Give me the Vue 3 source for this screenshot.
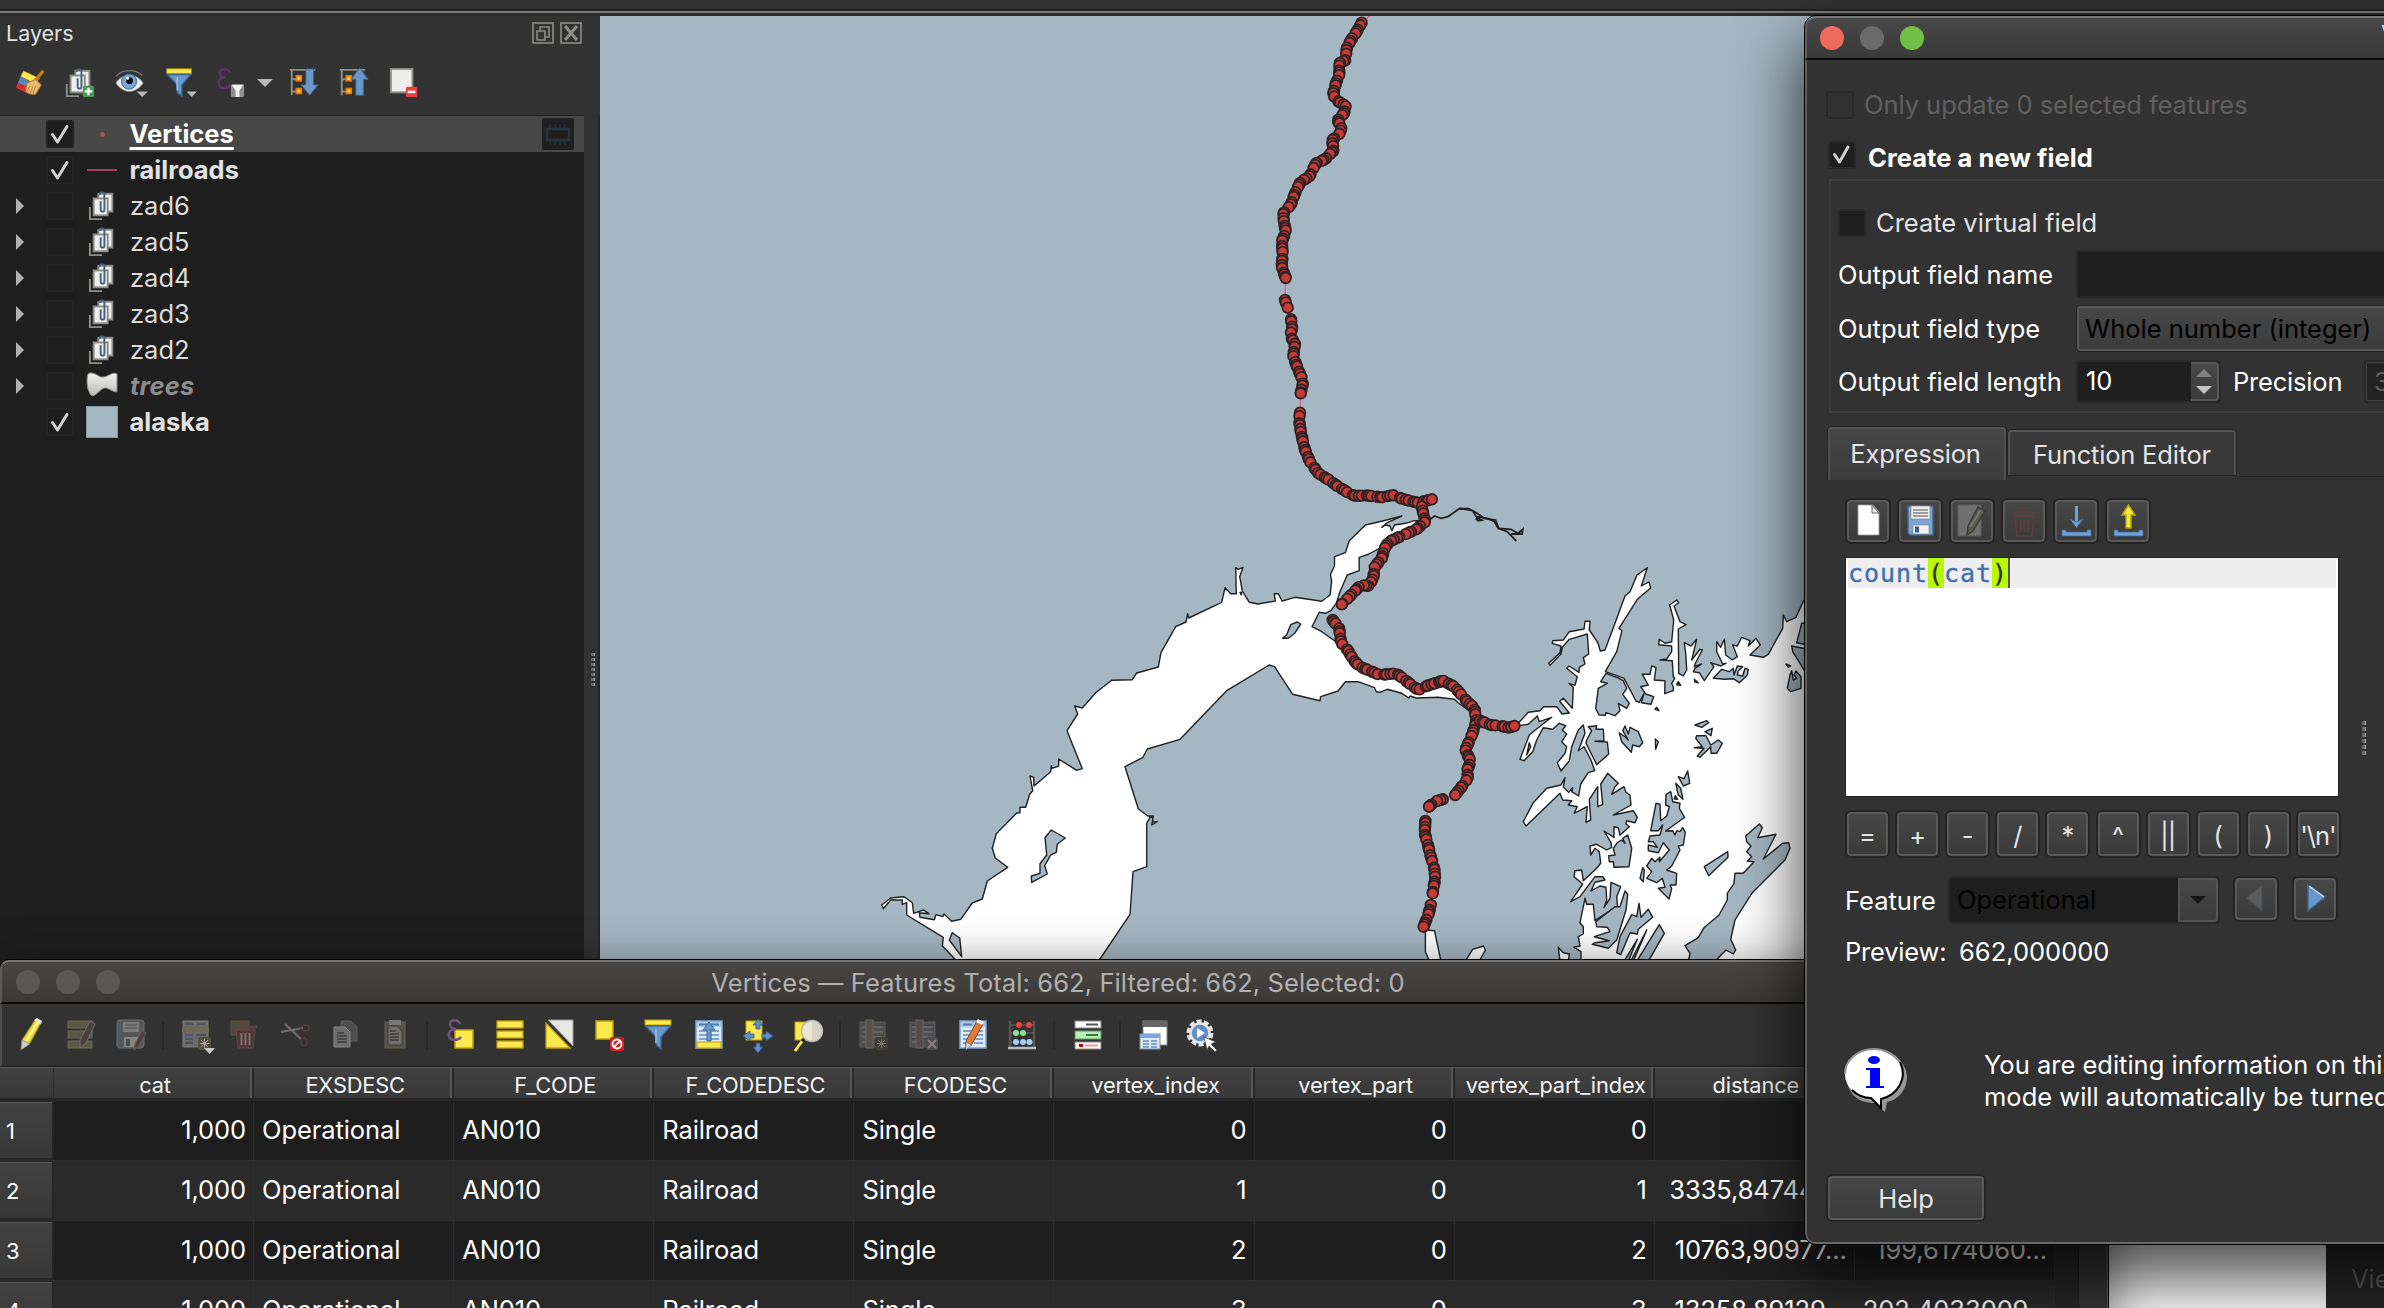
<script setup>
/* ---------- icon artwork, 32x32 grid ---------- */
const copies = `<path d="M2 18v13h13" fill="none" stroke="#8b8f87" stroke-width="2"/>
  <rect x="11" y="4" width="15" height="19" fill="#eeeeec" stroke="#888a85" stroke-width="2"/>
  <rect x="6" y="9" width="15" height="18" fill="#eeeeec" stroke="#888a85" stroke-width="2"/>
  <path d="M17.500 22V5a2.500 2.500 0 0 0-5 0M13.500 12v9a2 2 0 0 0 4 0" fill="none" stroke="#41607f" stroke-width="2"/>`
const funnel = `<rect x="2" y="2" width="26" height="5" fill="#fce94f" stroke="#c4a000" stroke-width="1"/>
  <path d="M2.500 8h25L18 19v12l-5-4v-8z" fill="#6a97cb" stroke="#3c6794" stroke-width="1.500"/>
  <path d="M13 11v14" stroke="#9fc0e4" stroke-width="1.500"/>`
const treeBranch = `<path d="M1 3h27M3 3v27M3 13h6M3 26h6" fill="none" stroke="#8b8f87" stroke-width="2"/>
  <rect x="7" y="8.500" width="7" height="7" fill="#f57900"/><rect x="9" y="10.500" width="3" height="3" fill="#fce94f"/>
  <rect x="7" y="22" width="7" height="7" fill="#f57900"/><rect x="9" y="24" width="3" height="3" fill="#fce94f"/>`
const sheet = `<rect x="3" y="3" width="26" height="27" fill="#dfe9f5" stroke="#7da3d0" stroke-width="1.500"/>
  <rect x="4" y="4" width="24" height="5" fill="#a9c8ec"/><path d="M6 6.500h9M18 6.500h8" stroke="#4f7cb3" stroke-width="2"/>
  <path d="M6 13h8M17 13h9M6 17h8M17 17h9M6 21h8M17 21h9M6 25h8M17 25h9" stroke="#5f8fc9" stroke-width="1.500"/>`

const icons = {
  brush: `<path d="M9 4l17 8-4 6-16-8z" fill="#fce94f" stroke="#8a7a1a" stroke-width=".6"/><path d="M6 10l15 8-4 5-14-6z" fill="#5b86b8"/>
    <path d="M3 17l14 6-2 6L1 22z" fill="#e32b25"/><path d="M13 17l9-4 6 6-6 10c-4 1-8-1-11-3z" fill="#e9b96e" stroke="#a8762c"/>
    <path d="M16 20l-3 6M19 21l-3 7M22 20l-3 9" stroke="#a8762c" stroke-width=".8"/><path d="M22 14l8-10" stroke="#c17d11" stroke-width="3.500"/>`,
  addGroup: copies + `<rect x="19" y="20" width="12" height="12" rx="2" fill="#4d9a52"/><path d="M25 22v8M21 26h8" stroke="#fff" stroke-width="2.400"/>`,
  group: copies,
  eye: `<path d="M1 17C7 7 22 5 30 17c-8 12-21 12-29 0z" fill="#eee" stroke="#8a8a86" stroke-width="1"/>
    <circle cx="15" cy="15.500" r="8" fill="#7ba5d6" stroke="#3c6794"/><circle cx="15.500" cy="14.500" r="3.600" fill="#0a0a0a"/>
    <circle cx="13.500" cy="12" r="1.600" fill="#fff"/><path d="M1 10C8 2 22 2 29 9" fill="none" stroke="#77777a" stroke-width="1.400"/>
    <path d="M23 26h12l-6 6z" fill="#b8b8b8"/>`,
  filterMenu: funnel + `<path d="M23 26h11l-5.500 6z" fill="#b8b8b8"/>`,
  filter: funnel,
  epsilon: `<path d="M16 6C14 1 6 1 5 6c0 4 3 5 6 5-5 0-8 3-7 7 1 5 9 6 13 1" fill="none" stroke="#5c3566" stroke-width="2.600"/>
    <rect x="17" y="18" width="14" height="14" rx="2" fill="#8f8f8d"/><path d="M18 19h12l-4 6v7h-4v-7z" fill="#f4f4f4"/>`,
  expand: treeBranch + `<path d="M18 2h8v17h5l-9 11-9-11h5z" fill="#6a97cb" stroke="#3c6794"/>`,
  collapse: treeBranch + `<path d="M18 30h8V13h5L22 1l-9 12h5z" fill="#6a97cb" stroke="#3c6794"/>`,
  remove: `<rect x="2" y="2" width="23" height="25" fill="#eeeeec" stroke="#888a85" stroke-width="2"/>
    <rect x="18" y="21" width="12" height="11" rx="2" fill="#ef4040"/><path d="M20 26.500h8" stroke="#fff" stroke-width="2.600"/>`,
  trees: `<defs><linearGradient id="tg" x2="0" y2="1"><stop stop-color="#f2f2f0"/><stop offset="1" stop-color="#b9b9b6"/></linearGradient></defs>
    <path d="M2 4c2-2 6-1 9 1s6 3 10 1c4-2 7-4 10-2v18c-4 0-7-3-11-4-5-1-8 7-14 8C1 22 0 10 2 4z" fill="url(#tg)" stroke="#888a85"/>`,
  chip: `<rect x="0" y="0" width="32" height="32" rx="2" fill="#1f1f1f"/><rect x="5" y="11" width="22" height="11" fill="none" stroke="#28333f" stroke-width="2.500"/>
    <path d="M8 6v4M13 6v4M18 6v4M23 6v4M8 23v4M13 23v4M18 23v4M23 23v4" stroke="#28333f" stroke-width="1.500"/>`,
  float: `<rect x="2" y="2" width="20" height="20" fill="none" stroke="#8e8c88" stroke-width="1.600"/><path d="M9 9V6h9v10h-4M6 10h8v9H6z" fill="none" stroke="#8e8c88" stroke-width="1.600"/>`,
  close: `<rect x="2" y="2" width="20" height="20" fill="none" stroke="#8e8c88" stroke-width="1.600"/><path d="M6 5l12 14M18 5L6 19" stroke="#8e8c88" stroke-width="3"/>`,
  /* attribute table toolbar */
  pencil: `<path d="M7 22L20 2l6 3-11 20-9 6z" fill="#edd93c" stroke="#96861d"/><path d="M11 23L23 4" stroke="#fff7a0" stroke-width="2"/><path d="M7 22l8 4-9 6z" fill="#ccc" stroke="#777" stroke-width=".6"/><path d="M19 2l7 4 1-3-5-3z" fill="#eee"/>`,
  multiEdit: `<g fill="#5b5741" stroke="#6d6a58"><rect x="3" y="3" width="24" height="7"/><rect x="3" y="13" width="24" height="7"/><rect x="3" y="23" width="24" height="7"/></g>
    <path d="M15 22L25 3l5 3-9 19-6 5z" fill="#4a3f3d" stroke="#75706e"/>`,
  saveEdit: `<rect x="2" y="2" width="27" height="28" rx="3" fill="#55585a" stroke="#6b6e70"/><rect x="8" y="4" width="16" height="10" fill="#7a7a7a"/><path d="M10 7h12M10 10h12" stroke="#505050"/>
    <rect x="9" y="19" width="14" height="10" fill="#858585"/><rect x="11" y="21" width="4" height="7" fill="#4a4a4a"/><path d="M20 26l7-13 4 2-7 13-5 4z" fill="#4f3d3a" stroke="#6a5a57"/>`,
  addFeature: `<rect x="3" y="3" width="25" height="26" fill="#6a6a6a" stroke="#7a7a7a"/><path d="M5 6h9M17 6h9M5 17h8M16 17h10M5 21h8M5 25h8" stroke="#4a5560" stroke-width="1.800"/><rect x="2" y="10" width="27" height="4" fill="#6e6a52"/>
    <rect x="18" y="19" width="13" height="13" rx="2" fill="#54503f"/><path d="M24.500 21v9M20 25.500h9M21 22l7 7M28 22l-7 7" stroke="#a3a3a0"/><path d="M24 30h11l-5.500 6z" fill="#c8c8c8"/>`,
  trash: `<rect x="2" y="3" width="18" height="14" fill="#4e4b3b" stroke="#5c5947"/><path d="M7 12h19l-2 18H9z" fill="#4c3636" stroke="#664848"/><path d="M5 9h23M12 5h9" stroke="#5c4242" stroke-width="3"/><path d="M12.500 15v12M16.500 15v12M20.500 15v12" stroke="#8a7272" stroke-width="1.800"/>`,
  cut: `<path d="M2 14l22-4M6 6l16 15" fill="none" stroke="#6e6e6e" stroke-width="2.200"/><ellipse cx="26" cy="10" rx="4" ry="3" fill="none" stroke="#573d3d" stroke-width="1.600"/><ellipse cx="25" cy="24" rx="3" ry="4" fill="none" stroke="#573d3d" stroke-width="1.600"/>`,
  copy: `<path d="M12 3h10l6 6v14H12z" fill="#4d4d4d" stroke="#5e5e5e"/><path d="M5 9h11l5 5v15H5z" fill="#6e6e6e" stroke="#858585"/><path d="M8 15h7M8 18h10M8 21h10M8 24h10" stroke="#3e3e3e" stroke-width="1.400"/>`,
  paste: `<rect x="6" y="4" width="20" height="26" fill="#555349" stroke="#625f54"/><rect x="10" y="2" width="12" height="5" fill="#777"/><path d="M9 8h9l5 5v14H9z" fill="#6e6e6e" stroke="#3c3c3c"/><path d="M11 13h6M11 16h9M11 19h9M11 22h9" stroke="#3e3e3e" stroke-width="1.400"/>`,
  selExpr: `<rect x="11" y="12" width="18" height="18" fill="#fce94f" stroke="#c4a000" stroke-width="1.500"/><path d="M16 6C14 1 6 1 6 6c0 4 3 5 6 5-5 0-8 3-7 7 1 5 9 5 12 1" fill="none" stroke="#75507b" stroke-width="2.400"/>`,
  selAll: `<g fill="#fce94f" stroke="#c4a000" stroke-width="1.300"><rect x="3" y="3" width="26" height="7"/><rect x="3" y="13" width="26" height="7"/><rect x="3" y="23" width="26" height="7"/></g>`,
  invert: `<path d="M5 2h25v26z" fill="#e8e8e6" stroke="#9a9a98"/><path d="M3 5v25h24z" fill="#fce94f" stroke="#c4a000" stroke-width="1.300"/>`,
  deselect: `<rect x="3" y="3" width="17" height="18" fill="#fce94f" stroke="#c4a000" stroke-width="1.500"/><rect x="17" y="19" width="14" height="14" rx="2" fill="#d32020"/><circle cx="24" cy="26" r="4.500" fill="none" stroke="#fff" stroke-width="1.800"/><path d="M21 29l6-6" stroke="#fff" stroke-width="1.800"/>`,
  moveTop: sheet + `<rect x="4" y="24" width="24" height="6" fill="#fce94f" stroke="#c4a000"/><path d="M14 23V12h-4l6-8 6 8h-4v11z" fill="#6a97cb" stroke="#3c6794"/>`,
  pan: `<rect x="4" y="3" width="16" height="19" fill="#fce94f" stroke="#c4a000"/><g fill="#5f8fc9" stroke="#2f5580" stroke-width=".8"><path d="M16 1l5 6h-3v4h-4V7h-3zM16 35l5-6h-3v-4h-4v4h-3zM1 18l7-5v3h4v4H8v3zM31 18l-7-5v3h-4v4h4v3z"/></g>`,
  zoomSel: `<rect x="3" y="4" width="14" height="18" fill="#fce94f" stroke="#c4a000"/><path d="M3 33l10-14" stroke="#fce94f" stroke-width="3"/><circle cx="20" cy="13" r="10.500" fill="#e9e7d4" stroke="#b9b8ad" stroke-width="1.500"/><path d="M20 3a10 10 0 0 1 0 20z" fill="#d6d4c3"/><circle cx="11" cy="22" r="1.800" fill="#111"/>`,
  newField: `<rect x="3" y="4" width="25" height="25" fill="#4b4e50" stroke="#5d5d5d"/><path d="M16 9h10M16 14h10M16 19h10M5 9h4M5 14h4M5 19h4M5 24h4" stroke="#6c6c6c" stroke-width="1.600"/><rect x="9" y="2" width="7" height="28" fill="#54514a" stroke="#6a675f"/><rect x="18" y="19" width="13" height="13" rx="2" fill="#403e35"/><path d="M24.500 21v9M20 25.500h9M21 22l7 7M28 22l-7 7" stroke="#77756a"/>`,
  delField: `<rect x="3" y="4" width="25" height="25" fill="#4b4e50" stroke="#5d5d5d"/><path d="M16 9h10M16 14h10M16 19h10M5 9h4M5 14h4M5 19h4M5 24h4" stroke="#6c6c6c" stroke-width="1.600"/><rect x="9" y="2" width="7" height="28" fill="#544c4c" stroke="#6a6060"/><rect x="19" y="19" width="12" height="13" rx="2" fill="#514b4b"/><path d="M21 22l8 8M29 22l-8 8" stroke="#8a8484" stroke-width="2"/>`,
  organize: sheet + `<path d="M9 23L20 3l6 3-11 20-6 6z" fill="#e07b39" stroke="#8f4513"/><path d="M9 24l6 3-6 5z" fill="#ddd" stroke="#555" stroke-width=".6"/><path d="M19 4l6 3 2-3-6-3z" fill="#eee"/>`,
  abacus: `<path d="M4 3v27M28 3v27" stroke="#555" stroke-width="2.500"/><path d="M4 7h24M4 15h24M4 24h24" stroke="#666"/><path d="M2 30h28" stroke="#bbb" stroke-width="2.500"/>
    <g fill="#ef4040"><circle cx="13" cy="7" r="3"/><circle cx="23" cy="7" r="3"/></g><g fill="#8ae28a"><circle cx="10" cy="15" r="3"/><circle cx="17" cy="15" r="3"/></g><g fill="#a4cdf5"><circle cx="10" cy="24" r="3"/><circle cx="17" cy="24" r="3"/><circle cx="23.500" cy="24" r="3"/></g>`,
  conditional: `<rect x="3" y="3" width="26" height="7" fill="#fff" stroke="#888"/><path d="M14 6.500h12" stroke="#555" stroke-width="2"/><rect x="3" y="13" width="26" height="8" fill="#b3f0b3" stroke="#5b9a5b"/><path d="M14 17h12" stroke="#4a704a" stroke-width="2"/><rect x="3" y="24" width="26" height="7" fill="#fff" stroke="#888"/><rect x="7" y="26" width="4" height="3" fill="#c00"/><path d="M13 27.500h13" stroke="#ef9a9a" stroke-width="2"/>`,
  dock: `<rect x="6" y="3" width="24" height="24" fill="#fff" stroke="#888"/><rect x="6" y="3" width="24" height="6" fill="#666"/><rect x="3" y="16" width="20" height="15" fill="#dfe9f5" stroke="#888"/><rect x="3" y="16" width="20" height="4" fill="#7da7d9"/><path d="M6 23h6M14 23h6M6 26h6M14 26h6M6 29h6M14 29h6" stroke="#5f8fc9" stroke-width="1.400"/>`,
  actions: `<circle cx="14" cy="15" r="11.500" fill="none" stroke="#e4e4e2" stroke-width="4" stroke-dasharray="5 2.200"/><circle cx="14" cy="15" r="9.500" fill="#5f8fc9" stroke="#e4e4e2" stroke-width="2.500"/><path d="M11 10l8 5-8 5z" fill="#fff"/><path d="M18 19l12 5-5 2 6 6-2 2-6-6-2 4z" fill="#fff" stroke="#444" stroke-width=".8"/>`,
  /* expression toolbar */
  file: `<path d="M6 1h15l6 7v23H6z" fill="#fff" stroke="#999" stroke-width=".8"/><path d="M20 1v8h7z" fill="#eee" stroke="#666"/>`,
  floppy: `<path d="M4 2h25v29H6l-2-2z" fill="#7ba5d6" stroke="#3c6794" stroke-width="1.400"/><rect x="7" y="2" width="19" height="13" fill="#eee" stroke="#888" stroke-width=".7"/><path d="M9 6h15M9 9h15M9 12h15" stroke="#888" stroke-width="1.300"/><rect x="9" y="21" width="16" height="9" fill="#f2f2f2" stroke="#888" stroke-width=".7"/><rect x="11" y="22.500" width="4" height="6" fill="#33608f"/>`,
  editExpr: `<path d="M2 1h23v31H2z" fill="#707070" stroke="#5c5c5c"/><path d="M12 22L22 3l7 4-12 20-6 4z" fill="#5a5b52" stroke="#3d3d38" stroke-width="1.500"/><path d="M14 23L25 6" stroke="#7c7d72" stroke-width="1.500"/>`,
  bin: `<path d="M7 12h19l-2 20H9z" fill="none" stroke="#573f3f" stroke-width="2"/><path d="M5 8h23M12 4h9" stroke="#573f3f" stroke-width="2.500"/><path d="M13 15v13M16.500 15v13M20 15v13" stroke="#573f3f" stroke-width="2"/>`,
  importIco: `<path d="M2 26v6h29v-6h-4v2H6v-2z" fill="#6fa0d8" stroke="#3c6794" stroke-width=".8"/><path d="M16.500 2v17" stroke="#6fa0d8" stroke-width="3"/><path d="M10 15l6.500 9 6.500-9-6.500 3z" fill="#6fa0d8" stroke="#3c6794" stroke-width=".8"/>`,
  exportIco: `<path d="M2 26v6h29v-6h-4v2H6v-2z" fill="#6fa0d8" stroke="#3c6794" stroke-width=".8"/><path d="M14 24V11h-4l6.500-10 6.500 10h-4v13z" fill="#f3e63c" stroke="#b3a800" stroke-width="1.400"/>`,
  prev: `<path d="M22 2v26L6 15z" fill="#5a5d60" stroke="#4a4a4a" stroke-width="1.200"/>`,
  next: `<path d="M9 2v26l17-14z" fill="#6a97cb" stroke="#3c6794" stroke-width="1.500"/><path d="M10 3l15 11" stroke="#cfe0f3" stroke-width="1.500"/>`
}

const layerTools = ['brush', 'addGroup', 'eye', 'filterMenu', 'epsilon', 'expand', 'collapse', 'remove']
const layers = [
  { name: 'Vertices', on: 1, sym: 'point', bold: 1, sel: 1 },
  { name: 'railroads', on: 1, sym: 'line', bold: 1 },
  { name: 'zad6', sym: 'group', exp: 1 }, { name: 'zad5', sym: 'group', exp: 1 }, { name: 'zad4', sym: 'group', exp: 1 },
  { name: 'zad3', sym: 'group', exp: 1 }, { name: 'zad2', sym: 'group', exp: 1 },
  { name: 'trees', sym: 'trees', exp: 1, dim: 1 },
  { name: 'alaska', on: 1, sym: 'fill', bold: 1 }
]
const tableGroups = [
  ['pencil', 'multiEdit', 'saveEdit'],
  ['addFeature', 'trash', 'cut', 'copy', 'paste'],
  ['selExpr', 'selAll', 'invert', 'deselect', 'filter', 'moveTop', 'pan', 'zoomSel'],
  ['newField', 'delField', 'organize', 'abacus'],
  ['conditional'],
  ['dock', 'actions']
]
const columns = ['cat', 'EXSDESC', 'F_CODE', 'F_CODEDESC', 'FCODESC', 'vertex_index', 'vertex_part', 'vertex_part_index', 'distance', 'angle']
const textCols = [1, 2, 3, 4]
const rows = [
  ['1,000', 'Operational', 'AN010', 'Railroad', 'Single', '0', '0', '0', '', ''],
  ['1,000', 'Operational', 'AN010', 'Railroad', 'Single', '1', '0', '1', '3335,847441...', ''],
  ['1,000', 'Operational', 'AN010', 'Railroad', 'Single', '2', '0', '2', '10763,90977...', '199,6174060...'],
  ['1,000', 'Operational', 'AN010', 'Railroad', 'Single', '3', '0', '3', '13258,89129...', '202,4033009...']
]
const exprTools = ['file', 'floppy', 'editExpr', 'bin', 'importIco', 'exportIco']
const operators = ['=', '+', '-', '/', '*', '^', '||', '(', ')', "'\\n'"]

/* ---------- map geometry ---------- */
// each sheet was digitised in its own grid: origin and units per pixel
const sheets = {
  A: [840, 460, 3, 3],
  B: [1240, 460, 2.751, 3],
  C: [1500, 560, 3, 3],
  E: [1180, 0, 3, 3]
}
const pts = (s, str) => {
  const [ox, oy, sx, sy] = sheets[s]
  return str.trim().split(/\s+/).map(p => {
    const [x, y] = p.split(',').map(Number)
    return [+(ox + x / sx).toFixed(1), +(oy + y / sy).toFixed(1)]
  })
}
const join = (...parts) => parts.flat().map(p => p.join(',')).join(' ')

const inlet = join(
  pts('A', '347,1500 307,1457 310,1432 200,1365 200,1328 187,1333 187,1320 152,1320 130,1346 125,1335 152,1314 192,1310 217,1328 221,1360 250,1350 267,1361 238,1358 240,1372 283,1379 288,1364 308,1370 312,1362 335,1384 362,1378 397,1329 427,1317 442,1263 503,1222 466,1194 457,1165 469,1121 530,1059 540,1058 540,1042 557,1042 569,1003 578,992 570,948 581,952 582,978 632,935 634,917 636,925 656,918 656,897 710,931 727,926 681,812 713,762 704,738 727,744 767,698 815,661 877,659 890,639 955,621 963,578 1007,500 1038,486 1043,461 1046,474 1145,427 1155,383 1172,401 1189,401 1187,323 1195,328 1209,322 1199,350 1207,393 1228,427 1254,432 1306,423 1303,401 1315,401 1326,423 1365,412 1445,424'),
  pts('B', '248,405 252,365 249,343 260,318 260,290 290,278 300,243 345,195 395,182 445,168 405,188 390,202 400,195 412,198 418,212 425,195 455,190 480,182 500,182 480,205 440,225 410,245 395,258 355,282 328,292 328,332 295,345 275,395 265,430 250,452 235,460 218,457 198,500 225,515 260,542 300,580 315,610 385,645 430,650 490,690 520,692 558,680 590,690 620,730 640,760 600,728 590,718 545,712 485,714 468,708 465,714 445,700 405,688 385,697 375,695 370,683 325,665 290,665 270,693 222,710 220,722 145,703 95,620 80,615 0,668'),
  pts('A', '1160,692 1020,838 922,867 909,892 855,920 895,1046 923,1068 940,1068 935,1095 952,1085 938,1086 938,1072 930,1072 920,1090 920,1220 879,1235 870,1363 778,1500')
)
const sound = join(pts('C', `55,490 85,457 120,452 131,440 170,440 186,462 208,459 179,424 190,415 217,445 220,382 207,370 225,376 232,350 200,325 207,318 237,337
  238,322 255,312 250,293 266,282 262,222 208,238 187,262 183,282 150,316 146,310 180,278 183,258 157,250 158,242 190,240 208,215 252,207 255,184 270,184 268,210
  293,247 301,273 315,270 345,190 375,108 390,95 411,45 442,23 424,78 447,66 452,84 412,118 357,205 366,212 350,275 316,335 348,346 372,355 408,423
  418,427 431,402 424,428 453,433 461,410 437,402 422,380 445,375 427,343 450,343 455,318 468,322 463,360 495,362 494,401 520,392 520,382 515,370 524,355 520,350 517,302 480,300
  500,297 515,275 515,258 476,254 478,238 495,250 515,245 521,180 509,135 530,120 536,128 522,138 540,185 558,194 535,207 536,340 550,348 560,330 557,280 553,248 573,258 590,238
  575,300 600,268 607,270 585,312 583,320 605,312 585,325 580,335 598,338 613,362 642,320 632,308 662,318 678,310 668,312 650,275 650,245 662,262 673,238 677,285 697,300 712,290 698,255 712,258
  725,232 750,242 745,258 768,235 781,255 750,285 790,292 805,283 848,205 850,165 860,185 888,172 912,120 2600,120 2600,2400 243,2400
  243,1175 222,1162 240,1158 235,1130 250,1122 250,1100 240,1088 255,1015 260,1033 280,1033 285,1082 345,1042 355,1065 350,1010 362,980 333,967 330,1015 312,1043 320,1020 318,982 300,978 273,993
  285,967 315,960 308,950 285,950 240,1010 212,1025 248,972 222,950 225,932 245,930 250,962 290,925 302,910 298,875 285,865 272,885 270,858 290,853 320,870 335,862 333,848 312,813 342,832 342,800 355,803 360,825 388,800
  378,792 380,782 405,788 412,772 400,752 340,765 393,735 390,705 378,697 372,680 335,703 345,680 355,670 323,640 302,672 308,733 293,740 293,680 268,718 272,780 258,787 262,740
  222,760 232,740 205,735 215,722 188,720 180,700 78,798 70,785 100,728 140,685 183,675 195,653 190,682 206,697 218,683 215,695 236,708 242,672 265,638 284,632 273,600 252,560 235,572 255,520
  250,495 235,510 215,560 208,602 183,633 172,608 195,580 200,560 185,545 200,522 187,510 197,497 178,490 158,508 130,503 110,540 98,575 72,602 60,598 88,525 103,512 155,472 118,485 112,468 85,493 55,497`))

const islands = [
  ['A', '1352,494 1372,486 1382,492 1364,520 1345,535 1328,535 1340,524'],
  ['A', '634,1110 676,1134 652,1153 649,1177 632,1185 614,1217 622,1242 575,1267 574,1248 600,1240 600,1211 620,1185 615,1133'],
  ['A', '337,1418 359,1434 365,1490 328,1440'],
  ['A', '1200,397 1205,398 1204,405'],
  ['C', '318,340 350,352 370,362 380,385 368,403 388,430 380,445 355,430 360,452 345,467 318,458 316,466 297,465 287,445 295,385 322,370 302,365'],
  ['C', '265,500 290,497 288,508 310,508 312,542 285,544 322,546 326,582 290,614 258,550 260,540 275,512'],
  ['C', '375,498 385,522 390,502 415,515 428,548 418,560 398,555 394,577 365,545 358,518 375,530 385,540 368,512'],
  ['C', '466,537 475,545 467,568'], ['C', '80,585 88,548 92,560'],
  ['C', '585,495 620,482 626,488 605,502'], ['C', '615,515 637,505 633,527'],
  ['C', '590,527 618,527 632,555 655,540 667,550 650,580 633,580 632,560 600,592 592,588 612,565 583,563 607,560 587,535'],
  ['C', '640,355 665,328 688,335 700,325 702,345 712,318 728,320 715,332 712,345 728,348 735,325 745,328 742,345 718,368 700,356 675,358'],
  ['C', '470,442 477,452 465,448'], ['C', '535,365 542,376 530,374'], ['C', '583,358 595,368 585,366'], ['C', '858,312 872,318 865,322'],
  ['C', '870,345 875,332 880,360 890,355 882,345 888,333 903,350 903,385 872,395 862,385'],
  ['C', '905,190 925,190 925,255 890,248'], ['C', '875,258 925,268 925,350 900,310 878,275'],
  ['C', '563,633 569,670 550,678 535,650 552,656'], ['C', '527,670 542,685 549,718 535,705'], ['C', '526,707 533,718 523,717'],
  ['C', '468,730 480,733 482,782 500,768 508,740 497,735 498,703 512,695 518,725 540,730 538,745 554,772 497,813 518,812 525,825 530,812 540,815 548,803 556,817 550,855 535,858 540,870 515,918 500,930 530,940 528,975 510,975 515,985 507,1017 475,985 495,982 487,955 470,968 440,955 455,935 440,918 455,895 465,905 480,892 478,905 508,870 490,848 475,878 445,872 445,855 472,862 460,845 445,845 450,828 480,825 488,795 475,812 452,812'],
  ['C', '428,923 433,930 430,965 420,955'],
  ['C', '383,825 395,865 387,920 342,922 340,905 328,905 326,887 345,885 340,865 352,848 365,840 375,850 368,835'],
  ['C', '613,920 683,875 684,892 626,947'],
  ['C', '645,1204 678,1170 700,1182 707,1170 692,1138 705,1080 757,998 855,900 870,865 866,848 848,850 790,897 828,823 773,833 787,803 778,792 737,828 740,845 753,858 740,875 755,890 742,903 762,905 730,940 705,940 702,970 682,1000 682,1020 657,1065 612,1103 595,1133 555,1157 570,1180 565,1204'],
  ['C', '375,993 383,1003 378,1050 350,1140 325,1165 277,1153 285,1148 328,1142 283,1130 330,1115 322,1102 290,1100 287,1085 345,1040 360,1040'],
  ['C', '417,1030 423,1072 445,1048 458,1072 415,1108 412,1122 390,1118 362,1184 350,1178 360,1130 395,1064 410,1070'],
  ['C', '478,1094 493,1120 445,1204 410,1204'], ['C', '412,1138 385,1204 372,1204'], ['C', '440,1110 400,1204 392,1204']
].map(([s, p]) => join(pts(s, p)))
const lagoons = [
  ['B', '510,1410 535,1412 552,1500 520,1500 510,1475'],
  ['B', '622,1500 640,1468 670,1458 675,1470 660,1500'],
  ['C', '175,1162 190,1178 208,1182 205,1204 180,1204']
].map(([s, p]) => join(pts(s, p)))
const rivers = [
  join(pts('B', '515,185 535,168 553,175 572,170 605,145 640,152 650,170 680,175 700,185 710,205 735,215 760,243')),
  join(pts('B', '605,147 628,145 650,158 672,175 703,180 712,205 745,208 765,220 778,208 776,222 745,222')),
  join(pts('B', '650,172 665,180 655,182 648,175'))
]

const tracks = [
  pts('E', '545,68 530,95 512,122 500,145 497,180 478,190 478,225 468,250 460,280 465,298 497,318 492,340 472,362 485,380 480,400 455,422 462,450 435,478 408,490 388,530 362,545 347,575 332,615 310,640 312,670 318,695 305,725 308,760 305,800 317,834'),
  pts('E', '315,900 323,923'),
  pts('E', '333,958 337,985 330,1008 345,1030 340,1070 355,1110 370,1145 362,1180'),
  [...pts('E', '360,1238 357,1260 363,1300 375,1350 390,1385 415,1420 447,1440 475,1460 500,1475'), ...pts('B', '298,102 320,108 345,106 390,112 420,105 450,118 490,128 528,118')],
  pts('B', '500,140 505,165 510,185 485,208 450,225 410,245 398,265 390,295 368,325 368,350 355,378 332,375 312,398 280,433'),
  pts('B', '255,480 273,505 278,548 298,573 312,600 330,620 385,645 430,640 460,665 490,690 520,675 558,662 590,680 625,725 645,745 650,785 640,820 620,870 635,905 625,930 627,955 610,980 592,1005'),
  pts('B', '660,782 690,795 715,797 740,803 755,798'),
  pts('B', '558,1018 535,1025 520,1040'),
  pts('B', '510,1083 508,1120 517,1155 525,1190 535,1228 537,1255 530,1300'),
  pts('B', '525,1335 518,1365 505,1400')
]
const railLines = [
  join([[1373, 13]], tracks[0], tracks[1], tracks[2], tracks[3], tracks[4]),
  join(tracks[5], tracks[7], tracks[8], tracks[9])
]
// irregular spacing between consecutive vertices of a line
const gaps = [3, 5, 2, 2.5, 6, 3, 2, 5.5, 2.5, 3.5, 7, 2, 4]
const vertices = []
tracks.forEach((t, k) => {
  let g = k * 3
  let next = 0
  let walked = 0
  for (let i = 1; i < t.length; i++) {
    const [x0, y0] = t[i - 1]
    const [x1, y1] = t[i]
    const len = Math.hypot(x1 - x0, y1 - y0)
    while (next <= walked + len) {
      const f = (next - walked) / len
      vertices.push([+(x0 + (x1 - x0) * f).toFixed(1), +(y0 + (y1 - y0) * f).toFixed(1)])
      next += gaps[g++ % gaps.length]
    }
    walked += len
  }
  vertices.push(t[t.length - 1])
})
</script>

<template>
  <div class="desktop">
    <div class="main">
      <div class="menubar"></div>
      <div class="body">
        <aside class="layers">
          <header class="dock-head">
            <span class="dock-title">Layers</span>
            <svg viewBox="0 0 24 24" class="dock-btn" v-html="icons.float"></svg>
            <svg viewBox="0 0 24 24" class="dock-btn" v-html="icons.close"></svg>
          </header>
          <div class="layer-tools">
            <template v-for="t in layerTools" :key="t">
              <svg viewBox="0 0 32 34" class="lt" v-html="icons[t]"></svg>
              <i v-if="t === 'epsilon'" class="menu-arrow"></i>
            </template>
          </div>
          <div class="tree">
            <div v-for="l in layers" :key="l.name" class="layer" :class="{ sel: l.sel }">
              <span class="twist"><i v-if="l.exp"></i></span>
              <span class="check" :class="{ on: l.on }">
                <svg v-if="l.on" viewBox="0 0 28 28"><path d="M6.500 14.500l5 7.500L21 6.500" /></svg>
              </span>
              <span class="sym">
                <i v-if="l.sym === 'point'" class="s-point"></i>
                <i v-else-if="l.sym === 'line'" class="s-line"></i>
                <i v-else-if="l.sym === 'fill'" class="s-fill"></i>
                <svg v-else viewBox="0 0 32 32" :class="l.sym" v-html="icons[l.sym]"></svg>
              </span>
              <span class="lname" :class="{ bold: l.bold, dim: l.dim }">{{ l.name }}</span>
              <svg v-if="l.sel" viewBox="0 0 32 32" class="chip" v-html="icons.chip"></svg>
            </div>
          </div>
          <div class="grip"><i v-for="n in 7" :key="n"></i></div>
        </aside>
        <svg class="map" viewBox="600 16 1726 1292">
          <rect x="600" y="16" width="1726" height="1292" fill="#a5b7c3" />
          <g class="coast">
            <polygon :points="inlet" />
            <polygon :points="sound" />
            <polygon v-for="(p, i) in lagoons" :key="'l' + i" :points="p" />
          </g>
          <g class="land"><polygon v-for="(p, i) in islands" :key="i" :points="p" /></g>
          <polyline v-for="(p, i) in rivers" :key="'r' + i" :points="p" class="river" />
          <polyline v-for="(p, i) in railLines" :key="'k' + i" :points="p" class="rail" />
          <g class="verts"><circle v-for="(v, i) in vertices" :key="i" :cx="v[0]" :cy="v[1]" r="5.300" /></g>
        </svg>
        <aside class="right-dock"><span>View</span></aside>
      </div>
    </div>

    <section class="win table-win">
      <header class="titlebar">
        <span class="lights off"><i></i><i></i><i></i></span>
        <span class="wtitle">Vertices — Features Total: 662, Filtered: 662, Selected: 0</span>
      </header>
      <div class="ttools">
        <template v-for="(g, gi) in tableGroups" :key="gi">
          <i v-if="gi" class="sep"></i>
          <svg v-for="n in g" :key="n" viewBox="0 0 32 34" v-html="icons[n]"></svg>
        </template>
      </div>
      <div class="grid">
        <div class="cells">
          <div class="hrow">
            <span class="corner"></span>
            <span v-for="c in columns" :key="c" class="hc">{{ c }}</span>
          </div>
          <div v-for="(r, ri) in rows" :key="ri" class="row" :class="{ alt: ri % 2 }">
            <span class="rh">{{ ri + 1 }}</span>
            <span v-for="(c, ci) in r" :key="ci" class="cell" :class="{ num: !textCols.includes(ci) }">{{ c }}</span>
          </div>
        </div>
        <div class="scroll"></div>
        <div class="margin"></div>
      </div>
    </section>

    <section class="win dialog">
      <header class="titlebar">
        <span class="lights"><i class="r"></i><i class="g0"></i><i class="g"></i></span>
        <span class="dtitle">Vertices — Field Calculator</span>
      </header>
      <div class="dbody">
        <div class="opt only"><span class="cb empty"></span><span>Only update 0 selected features</span></div>
        <div class="opt create">
          <span class="cb"><svg viewBox="0 0 28 28"><path d="M6.500 13.500l5 7.500L20 6" /></svg></span>
          <b>Create a new field</b>
        </div>
        <div class="fieldset">
          <div class="opt virt"><span class="cb"></span><span>Create virtual field</span></div>
          <div class="frow name"><label>Output field name</label><span class="input"></span></div>
          <div class="frow type"><label>Output field type</label><span class="combo">Whole number (integer)</span></div>
          <div class="frow len">
            <label>Output field length</label>
            <span class="spin"><em>10</em><span class="arrows"><i class="up"></i><i class="down"></i></span></span>
            <span class="prec">Precision</span>
            <span class="spin2">3</span>
          </div>
        </div>
        <nav class="tabs"><span class="tab active">Expression</span><span class="tab second">Function Editor</span><span class="rest"></span></nav>
        <div class="pane">
          <div class="col">
            <div class="etools"><span v-for="n in exprTools" :key="n" class="btn"><svg viewBox="0 0 33 33" v-html="icons[n]"></svg></span></div>
            <div class="editor"><div class="line"><span>count</span><mark>(</mark><span>cat</span><mark>)</mark><i class="caret"></i></div></div>
            <div class="ops"><span v-for="o in operators" :key="o" class="btn">{{ o }}</span></div>
            <div class="feature">
              <label>Feature</label>
              <span class="fcombo"><em>Operational</em><span class="drop"><i></i></span></span>
              <span class="btn nav"><svg viewBox="0 0 32 30" v-html="icons.prev"></svg></span>
              <span class="btn nav"><svg viewBox="0 0 32 30" v-html="icons.next"></svg></span>
            </div>
            <div class="preview"><label>Preview:</label><span>662,000000</span></div>
          </div>
          <div class="grip dgrip"><i v-for="n in 6" :key="n"></i></div>
        </div>
        <div class="info">
          <svg viewBox="0 0 64 64" width="64" height="64">
            <path d="M34 4c17 0 30 11 30 25S53 53 44 54l-2 10-10-9C14 55 4 45 4 29S17 4 34 4z" fill="#969696" transform="translate(-1 0)" />
            <path d="M30 1C44 1 59 11 59 26S47 49 37 51l0 9-10-10C12 49 1 39 1 26S14 1 30 1z" fill="#fff" />
            <path d="M56 14c8 16-2 33-19 37v9L27 50C18 50 12 46 8 42" fill="none" stroke="#000" stroke-width="2" />
            <path d="M1 26C1 12 14 1 30 1c10 0 20 5 26 13" fill="none" stroke="#969696" stroke-width="2" />
            <ellipse cx="30" cy="12" rx="6" ry="4" fill="#00f" /><path d="M22 20h14v18h4v2H22v-2h4V22h-4z" fill="#00f" />
          </svg>
          <p>You are editing information on this layer but the layer is currently not in edit mode. If you click OK, edit<br />mode will automatically be turned on.</p>
        </div>
        <span class="btn help">Help</span>
      </div>
    </section>
  </div>
</template>

<style>
body { background: #1e1e1e; overflow: hidden; }
</style>

<style scoped>
* { box-sizing: border-box; }
.desktop { position: relative; width: 2384px; height: 1308px; overflow: hidden; font-family: Inter, "Liberation Sans", sans-serif; font-size: 25.500px; line-height: 32px; color: #e2e2e2; white-space: nowrap; letter-spacing: 0; }
i, em { font-style: normal; display: block; }
svg { display: block; flex: none; overflow: visible; }

/* main window */
.main { width: 2384px; height: 1308px; display: flex; flex-direction: column; background: #313131; }
.menubar { height: 16px; background: linear-gradient(#323232 0 9px, #222 9px 11px, #7a7a7a 11px 13px, #2b2b2b 13px 16px); }
.body { flex: 1; display: flex; min-height: 0; }
.layers { width: 600px; flex: none; display: grid; grid-template: 36px 63px 1fr / 584px 16px; background: #323232; }
.dock-head { grid-column: 1 / 3; display: flex; align-items: center; padding: 0 17px 0 6px; gap: 4px; }
.dock-title { flex: 1; font-size: 21.500px; padding-bottom: 2px; }
.dock-btn { width: 24px; height: 24px; margin-top: -2px; }
.layer-tools { grid-column: 1 / 3; display: flex; align-items: flex-start; padding: 15px 0 0 14px; gap: 18px; }
.lt { width: 32px; height: 32px; }
.menu-arrow { border: 8px solid transparent; border-top: 8px solid #b8b8b8; border-bottom: 0; margin: 12px -3px 0 -7px; }
.tree { background: #1e1e1e; border-top: 1px solid #222; }
.layer { height: 36px; display: flex; align-items: center; padding-right: 10px; }
.layer.sel { background: #474747; }
.twist { width: 46px; padding-left: 16px; }
.twist i { width: 0; border: 8px solid transparent; border-left: 8px solid #b0b0b0; border-right: 0; }
.check { width: 28px; height: 28px; border: 2px solid #232323; border-radius: 2px; background: #1e1e1e; }
.check svg, .cb svg { width: 28px; height: 28px; margin: -2px; fill: none; stroke: #d0d0d0; stroke-width: 3; stroke-linecap: round; stroke-linejoin: round; }
.sym { width: 32px; height: 32px; margin-left: 12px; display: flex; align-items: center; justify-content: center; }
.sym svg { width: 32px; height: 32px; }
.sym svg.group { width: 30px; height: 30px; margin: -2px 0 0 2px; }
.s-point { width: 5px; height: 5px; border-radius: 50%; background: #a8505f; }
.s-line { width: 30px; height: 2px; background: #a0415b; }
.s-fill { width: 32px; height: 32px; background: #a5b7c3; border: 1px solid #8796a1; }
.lname { margin-left: 12px; flex: 1; color: #dcdcdc; }
.bold { font-weight: 700; color: #e2e2e2; letter-spacing: 0; margin-left: 11.500px; }
.sel .lname { color: #fff; text-decoration: underline; text-decoration-thickness: 3px; text-underline-offset: 4px; text-decoration-skip-ink: none; }
.dim { font-weight: 700; font-style: italic; color: #8c8c8c; letter-spacing: .2px; }
.chip { width: 32px; height: 32px; }
.grip { display: flex; flex-direction: column; gap: 2px; align-items: center; }
.grip i { width: 4px; height: 4px; background: #6a6a6a; border-right: 1px solid #a0a0a0; }
.layers .grip { padding: 538px 0 0 4px; border-right: 2px solid #262626; }
.layers .grip i { height: 3px; }
.map { width: 1726px; height: 1292px; overflow: hidden; }
.coast polygon, .land polygon { stroke: #1f2122; stroke-width: 1.400; stroke-linejoin: round; }
.coast polygon { fill: #fff; }
.land polygon { fill: #a5b7c3; }
.river { fill: none; stroke: #1f2122; stroke-width: 1.800; }
.rail { fill: none; stroke: #dc5f96; stroke-width: 1.400; }
.verts circle { fill: #c83a37; stroke: #302223; stroke-width: 1.800; }
.right-dock { width: 58px; background: #262626; padding: 1247px 0 0 25px; color: #5d5d5d; overflow: hidden; }

/* windows */
.win { position: absolute; display: flex; flex-direction: column; background: #323232; border: 1px solid #000; }
.titlebar { height: 44px; flex: none; display: flex; align-items: center; border-bottom: 2px solid #0a0a0a; }
.lights { display: flex; gap: 16px; }
.lights i { width: 24px; height: 24px; border-radius: 50%; background: #696969; }
.lights.off i { background: #595856; }
.lights .r { background: #ed6a5e; }
.lights .g { background: #72be47; }

.table-win { left: -1px; top: 959px; width: 2110px; height: 420px; border-radius: 10px 10px 0 0; box-shadow: 0 8px 44px 4px rgba(0, 0, 0, .42); }
.table-win .titlebar { background: linear-gradient(#474644, #3a3937); border-top: 2px solid #777674; border-radius: 9px 9px 0 0; border-left: 2px solid #5b5a58; padding-left: 14px; }
.wtitle { flex: 1; text-align: center; margin-right: 120px; margin-left: 8px; color: #b1b0ae; letter-spacing: .1px; padding-top: 2px; }
.ttools { height: 63px; flex: none; display: flex; align-items: center; gap: 17.750px; padding: 0 0 0 13px; border-left: 2px solid #4c4c4c; border-bottom: 2px solid #262626; }
.ttools svg { width: 32px; height: 34px; }
.sep { width: 2px; height: 28px; background: #272727; margin: 0 -1.700px 0 -2.700px; }
.grid { display: flex; flex: 1; min-height: 0; overflow: hidden; }
.cells { width: 2055px; flex: none; }
.hrow { display: flex; height: 34px; background: linear-gradient(#404040, #383838); border-top: 1px solid #555; border-bottom: 3px solid #252525; font-size: 21.800px; color: #f4f4f4; }
.corner { width: 54px; flex: none; border-right: 1px solid #2b2b2b; }
.hc { width: 200.100px; flex: none; text-align: center; line-height: 34px; padding-left: 4px; border-right: 2px solid #282828; box-shadow: inset -2px 0 #565656; overflow: hidden; letter-spacing: -.150px; }
.row { display: flex; height: 60px; background: #1e1e1e; border-bottom: 1px solid #2e2e2e; color: #fff; }
.row.alt { background: #2a2a2a; }
.rh { width: 54px; flex: none; padding: 1px 0 0 6px; line-height: 56px; font-size: 22px; background: linear-gradient(#424242, #373737); border: solid #262626; border-width: 1px 2px 2px 0; box-shadow: inset 0 1px #555; }
.cell { width: 200.100px; flex: none; padding: 0 7px 0 8px; line-height: 57px; border-right: 1px solid #2d2d2d; overflow: hidden; letter-spacing: -.100px; }
.num { text-align: right; }
.scroll { width: 24px; background: #262626; border-right: 1px solid #1c1c1c; }
.margin { flex: 1; background: #353535; border-right: 1px solid #606060; }

.dialog { left: 1804px; top: 15px; width: 1100px; height: 1230px; border-radius: 12px; box-shadow: 0 30px 62px 6px rgba(0, 0, 0, .68), inset 2px 0 #5e5e5e, inset 0 -2px #6a6a6a; }
.dialog .titlebar { background: linear-gradient(#484848, #393939); border-top: 2px solid #777; border-left: 2px solid #5e5e5e; border-radius: 11px 11px 0 0; padding-left: 13px; }
.dtitle { margin-left: 457px; margin-top: -6px; color: #d0d0d0; }
.dbody { padding: 30px 0 0 22px; color: #fff; }
.opt { display: flex; align-items: center; height: 30px; }
.cb { width: 28px; height: 28px; background: #1e1e1e; border: 2px solid #292929; border-radius: 2px; flex: none; }
.cb.empty { background: #303030; }
.only { color: #606060; gap: 10px; letter-spacing: -.050px; }
.only .cb { margin-left: -1px; }
.create { margin: 20px 0 0 1px; gap: 12px; }
.create b { padding-top: 5px; letter-spacing: .050px; }
.fieldset { margin: 9px 0 0 2px; border: 2px solid #3d3d3d; border-right: 0; height: 234px; padding: 27px 0 0 7px; }
.virt { gap: 10px; height: 28px; color: #e2e2e2; padding-top: 1px; }
.frow { display: flex; align-items: center; }
.frow label { width: 238px; flex: none; }
.name { margin-top: 14px; height: 48px; }
.name label { padding-top: 1px; }
.input { flex: 1; height: 48px; background: #1e1e1e; border: 2px solid #292929; border-radius: 4px; }
.type { margin-top: 7px; height: 47px; }
.combo { flex: 1; height: 47px; line-height: 45px; padding-left: 8px; color: #000; background: linear-gradient(#474747, #3b3b3b); border: 1px solid #232323; box-shadow: inset 0 0 0 2px #565656; border-radius: 4px; }
.len { margin-top: 8px; height: 43px; }
.len label { padding-top: 1px; }
.spin { width: 145px; height: 43px; background: #1e1e1e; border: 2px solid #292929; border-radius: 4px; display: flex; }
.spin em { flex: 1; line-height: 38px; padding-left: 8px; }
.arrows { width: 28px; background: linear-gradient(#474747, #3b3b3b); border: 2px solid #575757; border-left: 0; display: flex; flex-direction: column; justify-content: center; gap: 9px; align-items: center; border-radius: 0 4px 4px 0; }
.up { border: 8px solid transparent; border-bottom: 8px solid #808080; border-top: 0; }
.down { border: 8px solid transparent; border-top: 8px solid #c4c4c4; border-bottom: 0; }
.prec { margin-left: 12px; width: 131px; padding-top: 1px; letter-spacing: -.200px; }
.spin2 { flex: 1; height: 43px; line-height: 38px; background: #232323; border: 3px solid #2a2a2a; outline: 1px solid #444; outline-offset: -3px; padding-left: 7px; color: #5c5c5c; border-radius: 4px; }
.tabs { display: flex; align-items: flex-end; height: 56px; margin-top: 12px; }
.tab { display: block; text-align: center; color: #e4e4e4; letter-spacing: -.200px; border: 1px solid #232323; border-bottom: 0; border-radius: 5px 5px 0 0; box-shadow: inset 0 2px #575757, inset 2px 0 #505050, inset -2px 0 #505050; }
.active { width: 180px; height: 54px; line-height: 53px; padding-right: 3px; background: linear-gradient(#474747, #3b3b3b); align-self: flex-start; margin-top: 1px; }
.second { width: 230px; height: 47px; line-height: 50px; background: #393939; margin-bottom: 5px; }
.rest { flex: 1; }
.second, .rest { border-bottom: 1px solid #272727; }
.rest { height: 1px; margin-bottom: 4px; }
.pane { display: flex; padding-left: 18px; }
.col { width: 496px; }
.btn { display: flex; align-items: center; justify-content: center; background: linear-gradient(#474747, #3a3a3a); border: 2px solid #242424; border-radius: 6px; box-shadow: inset 0 0 0 2px #585858; color: #e4e4e4; }
.etools { display: flex; gap: 6px; margin-top: 17px; }
.etools .btn { width: 46px; height: 46px; }
.etools svg { width: 33px; height: 33px; margin-top: -2px; }
.editor { margin-top: 13px; width: 494px; height: 240px; background: #fff; border: 1px solid #262626; }
.line { display: flex; height: 30px; line-height: 31px; margin: 0 2px; background: #eee; font-family: "DejaVu Sans Mono", monospace; font-size: 25px; letter-spacing: .950px; color: #4271ae; -webkit-text-stroke: .4px currentColor; }
mark { background: #b7f907; color: #333; }
.caret { width: 2px; background: #555; }
.ops { display: flex; justify-content: space-between; margin-top: 13px; }
.ops .btn { width: 45px; height: 48px; padding: 3px 1px 0 0; letter-spacing: -1px; }
.feature { display: flex; align-items: center; margin-top: 18px; height: 48px; }
.feature label { width: 103px; padding-top: 1px; }
.fcombo { width: 272px; height: 48px; background: #1e1e1e; border: 2px solid #292929; border-radius: 5px; display: flex; }
.fcombo em { flex: 1; padding-left: 7px; line-height: 44px; color: #000; }
.drop { width: 40px; display: flex; align-items: center; justify-content: center; background: linear-gradient(#474747, #3b3b3b); border: 2px solid #525252; border-radius: 0 4px 4px 0; }
.drop i { border: 8px solid transparent; border-top: 8px solid #161616; border-bottom: 0; }
.nav { width: 46px; height: 46px; margin: -3px 0 0 13px; }
.nav svg { width: 32px; height: 30px; margin-top: -2px; }
.preview { display: flex; margin-top: 12px; }
.preview label { width: 114px; letter-spacing: -.200px; }
.dgrip { padding: 240px 0 0 21px; }
.info { display: flex; margin: 80px 0 0 17px; gap: 76px; }
.info p { margin: 1px 0 0; }
.help { width: 160px; height: 48px; margin: 61px 0 0 -1px; padding-top: 2px; }
</style>
